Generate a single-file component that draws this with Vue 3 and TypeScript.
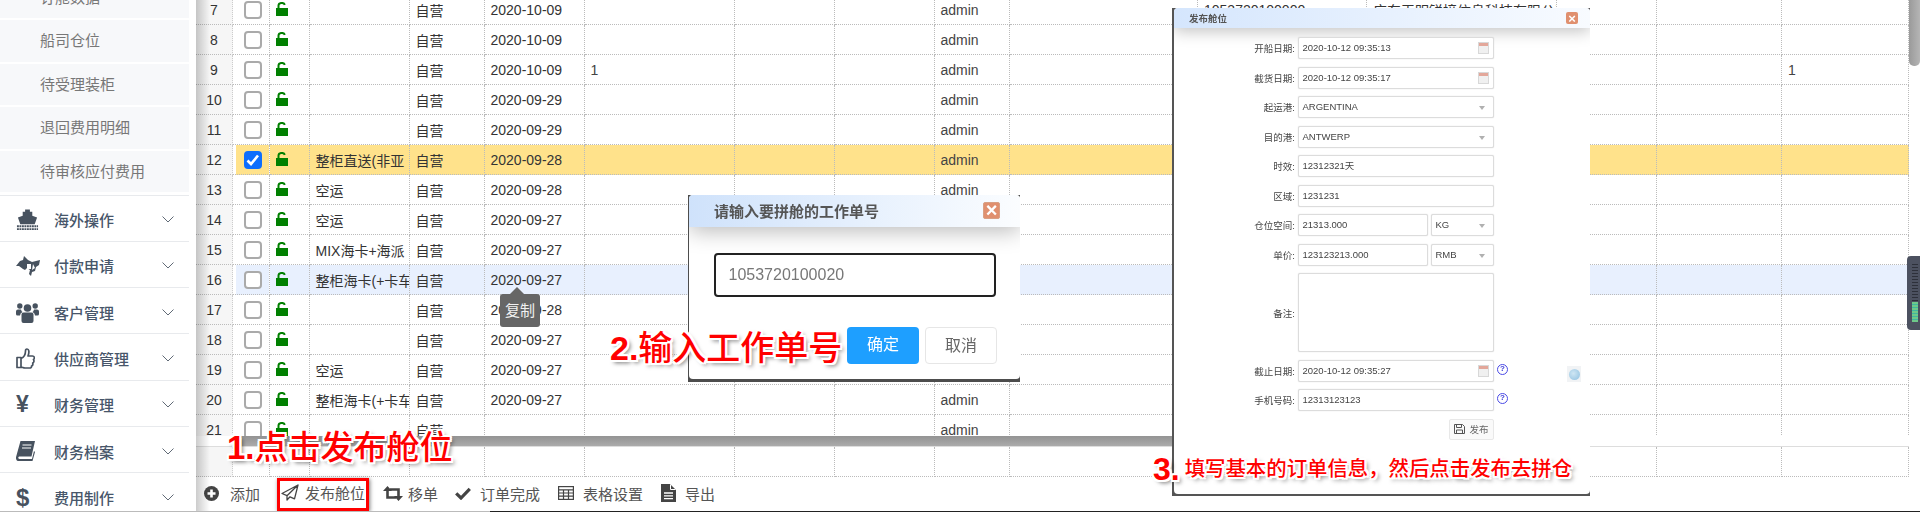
<script setup lang="ts">
const colWidths: number[] = [37, 37, 39.5, 100, 75, 100, 150, 100, 100, 75, 188.5, 169, 190, 100, 125, 127]

interface Row {
  no: number
  type?: string
  date?: string
  remark?: string
  orderNo?: string
  company?: string
  last?: string
  cls?: string
  checked?: boolean
}

const rows: Row[] = [
  { no: 7, date: '2020-10-09', orderNo: '1053720100000', company: '广东天明锐接信息科技有限公司' },
  { no: 8, date: '2020-10-09' },
  { no: 9, date: '2020-10-09', remark: '1', last: '1' },
  { no: 10, date: '2020-09-29' },
  { no: 11, date: '2020-09-29' },
  { no: 12, type: '整柜直送(非亚', date: '2020-09-28', cls: 'selected', checked: true },
  { no: 13, type: '空运', date: '2020-09-28' },
  { no: 14, type: '空运', date: '2020-09-27' },
  { no: 15, type: 'MIX海卡+海派', date: '2020-09-27' },
  { no: 16, type: '整柜海卡(+卡车)', date: '2020-09-27', cls: 'hover' },
  { no: 17, date: '2020-09-28' },
  { no: 18, date: '2020-09-27' },
  { no: 19, type: '空运', date: '2020-09-27' },
  { no: 20, type: '整柜海卡(+卡车)', date: '2020-09-27' },
  { no: 21 },
]

const subItems: string[] = ['订舱数据', '船司仓位', '待受理装柜', '退回费用明细', '待审核应付费用']
const menuItems: { key: string; label: string }[] = [
  { key: 'ship', label: '海外操作' },
  { key: 'hand', label: '付款申请' },
  { key: 'users', label: '客户管理' },
  { key: 'thumb', label: '供应商管理' },
  { key: 'yen', label: '财务管理' },
  { key: 'book', label: '财务档案' },
  { key: 'usd', label: '费用制作' },
]
</script>

<template>
  <div class="page">
    <div class="body">
      <aside class="side">
        <div class="subs">
          <div v-for="s in subItems" :key="s" class="sub">{{ s }}</div>
        </div>
        <div v-for="m in menuItems" :key="m.key" class="menu">
          <span class="micon">
            <svg v-if="m.key === 'ship'" width="23" height="22" viewBox="0 0 24 22" fill="#47525f">
              <path d="M9.500 0h5v2.500h2.500v4l5 2-2.500 7H4.500l-2.500-7 5-2v-4h2.500z" />
              <path d="M1 17.500h22M1 20.500h22" stroke="#47525f" stroke-width="2" stroke-dasharray="2 .6" fill="none" />
            </svg>
            <svg v-else-if="m.key === 'hand'" width="25" height="20" viewBox="0 0 25 20" fill="#47525f">
              <path d="M0 10 4 5l3-1 1-4 4 4 4 2 4-1 4-1-1 5-3 2-1 4-3 1-1 4-2-2 1-4-3-2-2 2-2-1-4-3H3z" />
              <path d="M11 8h4v5h-4zM17 8l2 4-3 2z" fill="#fff" />
            </svg>
            <svg v-else-if="m.key === 'users'" width="23" height="21" viewBox="0 0 23 21" fill="#47525f">
              <circle cx="11.500" cy="6" r="3.800" />
              <circle cx="3.800" cy="4" r="2.700" />
              <circle cx="19.200" cy="4" r="2.700" />
              <path d="M5.500 12.500q0-2 2-2h8q2 0 2 2V19q0 2-2 2h-8q-2 0-2-2zM0 9.500q0-2 2-2h3q.5 2 1.500 2.500Q4 11 4 13.500H1.500Q0 13.500 0 12zM23 9.500q0-2-2-2h-3q-.5 2-1.500 2.500 2.500 1 2.500 3.500h2.500q1.500 0 1.500-1.500z" />
            </svg>
            <svg v-else-if="m.key === 'thumb'" width="19" height="21" viewBox="0 0 19 21" fill="none" stroke="#47525f" stroke-width="1.700">
              <path d="M1 9.500h4v10H1zM5 10.500c2.500-1 4.500-4 4.500-7.500 0-1 .5-2 1.500-2 2 0 2.500 3 1 7h4.500c2 0 2.500 2.500 1 3.500.8 1.500.5 3-.8 3.500.4 1.500-.2 2.700-1.200 3 .2 1.500-.7 2-2 2H9c-1.500 0-2.500-.8-4-1" stroke-linejoin="round" />
            </svg>
            <span v-else-if="m.key === 'yen'" class="glyph">¥</span>
            <svg v-else-if="m.key === 'book'" width="19" height="20" viewBox="0 0 19 20" fill="#47525f">
              <path d="M4.500 0H19l-3.500 15.500H3.500c-1.500 0-1.700 2.500 0 2.500H16l2-8 1 1-2.500 9H3C.5 20-.5 18 .2 15.500z" />
              <path d="M6.500 4h9M6 7h9" stroke="#fff" stroke-width="1.200" />
            </svg>
            <span v-else class="glyph usd">$</span>
          </span>
          <span class="mlabel">{{ m.label }}</span>
          <svg class="chev" width="12" height="7" viewBox="0 0 12 7" fill="none" stroke="#606a76" stroke-width="1">
            <path d="M.5.500 6 6 11.500.500" />
          </svg>
        </div>
      </aside>

      <main class="main">
        <div class="grid-wrap">
          <table class="grid">
            <colgroup>
              <col v-for="(w, i) in colWidths" :key="i" :style="{ width: w + 'px' }" />
            </colgroup>
            <tbody>
              <tr v-for="r in rows" :key="r.no" :class="r.cls">
                <td class="idx">{{ r.no }}</td>
                <td class="cb-cell">
                  <span class="cb" :class="{ on: r.checked }">
                    <svg v-if="r.checked" width="14" height="12" viewBox="0 0 14 12" fill="none" stroke="#fff" stroke-width="2.600">
                      <path d="M1.500 6.500 5 10l7-8.500" />
                    </svg>
                  </span>
                </td>
                <td class="lock">
                  <svg width="12" height="14" viewBox="0 0 12 14">
                    <path d="M2.500 6V3.500a3.200 2.600 0 0 1 6.300-.6" fill="none" stroke="#008000" stroke-width="2" />
                    <rect y="6" width="12" height="8" fill="#008000" />
                  </svg>
                </td>
                <td>{{ r.type }}</td>
                <td>自营</td>
                <td>{{ r.date }}</td>
                <td class="soft">{{ r.remark }}</td>
                <td v-for="n in 2" :key="n"></td>
                <td class="soft">admin</td>
                <td></td>
                <td>{{ r.orderNo }}</td>
                <td>{{ r.company }}</td>
                <td></td>
                <td></td>
                <td class="soft">{{ r.last }}</td>
              </tr>
            </tbody>
          </table>
        </div>
        <div class="hscroll"><div class="hbar"></div></div>
        <table class="grid foot">
          <colgroup>
            <col v-for="(w, i) in colWidths" :key="i" :style="{ width: w + 'px' }" />
          </colgroup>
          <tbody>
            <tr>
              <td class="idx"></td>
              <td v-for="n in 15" :key="n"></td>
            </tr>
          </tbody>
        </table>
        <div class="toolbar">
          <span class="tool add">
            <svg width="15" height="15" viewBox="0 0 15 15"><circle cx="7.500" cy="7.500" r="7.500" fill="#444" /><path d="M7.500 3.500v8M3.500 7.500h8" stroke="#fff" stroke-width="2.600" /></svg>
            添加
          </span>
          <span class="tool pub">
            <svg width="18" height="17" viewBox="0 0 18 17" fill="none" stroke="#444" stroke-width="1.300" stroke-linejoin="round"><path d="M17 1 1 9.500l5 2.200zM17 1 6 11.700V16l3-3.200 4.500 2z" /></svg>
            发布舱位
          </span>
          <span class="tool move">
            <svg width="20" height="15" viewBox="0 0 20 15" fill="none" stroke="#444" stroke-width="2.600"><path d="M4.500 3v8.500H13" /><path d="M15.500 12V3.500H7" /><path d="M0 5l4.500-5L9 5zM11 10l4.500 5L20 10z" fill="#444" stroke="none" /></svg>
            移单
          </span>
          <span class="tool done">
            <svg width="16" height="13" viewBox="0 0 16 13" fill="none" stroke="#444" stroke-width="3.200"><path d="M1.200 6.300 6 11 14.800 1.800" /></svg>
            订单完成
          </span>
          <span class="tool tbl">
            <svg width="16" height="14" viewBox="0 0 16 14" fill="none" stroke="#444" stroke-width="1.200"><rect x=".6" y=".6" width="14.800" height="12.800" /><path d="M.6 3.800h14.800M.6 7h14.800M.6 10.200h14.800M5.500 3.800v9.600M10.500 3.800v9.600" /></svg>
            表格设置
          </span>
          <span class="tool exp">
            <svg width="15" height="18" viewBox="0 0 15 18"><path d="M0 0h9l6 6v12H0z" fill="#444" /><path d="M9.500.500v5h5" fill="none" stroke="#fff" stroke-width="1" /><path d="M3 9h9M3 11.800h9M3 14.600h9" stroke="#fff" stroke-width="1.300" /></svg>
            导出
          </span>
        </div>
        <div class="gutter-shadow"></div>
      </main>

      <div class="vbar"></div>
      <div class="widget"><i></i></div>

      <div class="tip">复制</div>

      <section class="dlg2">
        <div class="dlg2-inner">
          <header class="dlg2-title">
            <b>请输入要拼舱的工作单号</b>
            <span class="close big">×</span>
          </header>
          <div class="dlg2-input">1053720100020</div>
          <div class="dlg2-btns">
            <span class="btn ok">确定</span>
            <span class="btn no">取消</span>
          </div>
        </div>
      </section>

      <section class="dlg3">
        <div class="dlg3-inner">
          <header class="dlg3-title">
            <b>发布舱位</b>
            <span class="close">×</span>
          </header>
          <div class="form">
            <div class="frow"><label>开船日期:</label><div class="inp full">2020-10-12 09:35:13<span class="cal"></span></div></div>
            <div class="frow"><label>截货日期:</label><div class="inp full">2020-10-12 09:35:17<span class="cal"></span></div></div>
            <div class="frow"><label>起运港:</label><div class="inp full">ARGENTINA<span class="arr"></span></div></div>
            <div class="frow"><label>目的港:</label><div class="inp full">ANTWERP<span class="arr"></span></div></div>
            <div class="frow"><label>时效:</label><div class="inp full">12312321天</div></div>
            <div class="frow"><label>区域:</label><div class="inp full">1231231</div></div>
            <div class="frow"><label>仓位空间:</label><div class="inp num">21313.000</div><div class="inp unit">KG<span class="arr"></span></div></div>
            <div class="frow"><label>单价:</label><div class="inp num">123123213.000</div><div class="inp unit">RMB<span class="arr"></span></div></div>
            <div class="frow tall"><label>备注:</label><div class="inp full area"></div></div>
            <div class="frow"><label>截止日期:</label><div class="inp full">2020-10-12 09:35:27<span class="cal"></span></div><span class="help">?</span></div>
            <div class="frow"><label>手机号码:</label><div class="inp full">12313123123</div><span class="help">?</span></div>
            <div class="frow end"><span class="pubbtn">
              <svg width="11" height="10" viewBox="0 0 11 10" fill="none" stroke="#555" stroke-width="1"><path d="M.5.500h8l2 2v7H.5zM2.500.500v3h5v-3M2.500 9.500v-3.500h6v3.500" /></svg>
              发布
            </span></div>
          </div>
          <div class="globe"><i></i></div>
        </div>
      </section>

      <div class="note n1"><b>1.</b>点击发布舱位</div>
      <div class="note n2"><b>2.</b>输入工作单号</div>
      <div class="note n3"><b>3.</b><span>填写基本的订单信息，然后点击发布去拼仓</span></div>
    </div>
    <div class="edge"></div>
  </div>
</template>

<style>
html,
body {
  margin: 0;
  background: #fff;
}
</style>

<style scoped>
.page {
  width: 1920px;
  height: 512px;
  overflow: hidden;
  font-family: "Liberation Sans", "Noto Sans CJK SC", sans-serif;
  color: #333;
}
.body {
  position: relative;
  display: flex;
  height: 511px;
  overflow: hidden;
}
.edge {
  height: 1px;
  background: linear-gradient(to right, #bbb 490px, #222 490px);
}

/* sidebar */
.side {
  flex: 0 0 189px;
  width: 189px;
}
.subs {
  margin-top: -23.500px;
  display: flex;
  flex-direction: column;
  gap: 2px;
  padding-bottom: 2.500px;
  border-bottom: 1px solid #e8eaed;
}
.sub {
  height: 41.500px;
  line-height: 41.500px;
  padding-left: 40px;
  background: #f7f8fa;
  font-size: 15px;
  color: #777;
}
.menu {
  box-sizing: border-box;
  height: 46.330px;
  display: flex;
  align-items: center;
  padding-top: 3px;
  border-bottom: 1.500px solid #e8eaed;
  font-size: 15px;
  color: #47566a;
  font-weight: 500;
}
.micon {
  flex: 0 0 54px;
  padding-left: 16px;
  box-sizing: border-box;
  display: flex;
  align-items: center;
}
.glyph {
  font-size: 23px;
  font-weight: 700;
  line-height: 1;
  color: #47525f;
}
.usd {
  font-size: 24px;
}
.mlabel {
  flex: 1;
}
.chev {
  margin-right: 15px;
}

/* table */
.main {
  position: relative;
  margin-left: 7px;
  flex: 0 0 1713px;
  width: 1713px;
  display: flex;
  flex-direction: column;
}
.grid-wrap {
  height: 436px;
  overflow: hidden;
}
.grid {
  table-layout: fixed;
  width: 1713px;
  border-collapse: separate;
  border-spacing: 0;
  font-size: 14px;
}
.grid-wrap .grid {
  margin-top: -5px;
}
.grid td {
  box-sizing: border-box;
  height: 30px;
  padding: 0 0 0 6px;
  border-right: 1px dotted #bbb;
  border-bottom: 1px dotted #bbb;
  white-space: nowrap;
  overflow: hidden;
}
.grid td.idx {
  padding: 0;
  text-align: center;
  background: #f6f6f6;
  border-right: 1px dotted #ccc;
}
.soft {
  color: #444;
}
.cb-cell {
  padding-left: 11px !important;
}
.cb {
  box-sizing: border-box;
  display: flex;
  align-items: center;
  justify-content: center;
  width: 18px;
  height: 18px;
  margin-top: 1px;
  border: 2px solid #aaa;
  border-radius: 4px;
  background: #fff;
}
.cb.on {
  background: #0d6efd;
  border-color: #0d6efd;
}
.grid td.lock {
  vertical-align: top;
  padding-top: 7px;
}
.lock svg {
  display: block;
}
.selected td {
  background: #ffe28b;
}
.selected td.cb-cell {
  background: linear-gradient(to right, #fff 3px, #ffe28b 3px);
}
.hover td {
  background: #e8f0fe;
}
.hover td.cb-cell {
  background: linear-gradient(to right, #fff 3px, #e8f0fe 3px);
}
.hscroll {
  height: 11px;
  padding-left: 37px;
  box-sizing: border-box;
  border-bottom: 1px solid #ddd;
}
.hbar {
  width: 960px;
  height: 10px;
  background: linear-gradient(#939393, #ababab);
}
.foot td {
  height: 30px;
}
.toolbar {
  height: 34px;
  display: flex;
  align-items: center;
  font-size: 15px;
  color: #555;
}
.tool {
  display: flex;
  align-items: center;
  white-space: nowrap;
  position: relative;
  top: -1px;
}
.add {
  margin-left: 8px;
  gap: 11px;
}
.pub {
  box-sizing: border-box;
  height: 33px;
  top: 0;
  margin-left: 17px;
  padding: 0 1px 3px 1px;
  gap: 6px;
  border: 3px solid #f00;
  box-shadow: 1px 1px 4px rgba(0, 0, 0, 0.5);
}
.move {
  margin-left: 14px;
  gap: 5px;
}
.done {
  margin-left: 17px;
  gap: 9px;
}
.tbl {
  margin-left: 18px;
  gap: 9px;
}
.exp {
  margin-left: 18px;
  gap: 9px;
}
.gutter-shadow {
  position: absolute;
  left: 0;
  top: 0;
  bottom: 0;
  width: 14px;
  background: linear-gradient(to right, rgba(0, 0, 0, 0.2), rgba(0, 0, 0, 0));
  pointer-events: none;
}

/* right edge */
.vbar {
  position: absolute;
  left: 1909px;
  top: 0;
  width: 11px;
  height: 66px;
  border-radius: 0 0 5px 5px;
  background: linear-gradient(to right, #9a9a9a, #b5b5b5);
}
.widget {
  position: absolute;
  left: 1907px;
  top: 256px;
  width: 13px;
  height: 74px;
  border-radius: 4px 0 0 4px;
  background: #4c5160;
}
.widget i {
  position: absolute;
  left: 5px;
  top: 8px;
  width: 6px;
  height: 58px;
  background: repeating-linear-gradient(#2d303a 0 1px, #4c5160 1px 3px);
}
.widget i::after {
  content: "";
  position: absolute;
  left: 0;
  right: 0;
  bottom: 0;
  height: 20px;
  background: repeating-linear-gradient(#6ec98a 0 2px, #3fb7a0 2px 3px);
}

/* tooltip */
.tip {
  position: absolute;
  left: 500px;
  top: 294px;
  width: 40px;
  height: 33px;
  line-height: 33px;
  text-align: center;
  background: #666;
  color: #f0f0f0;
  border-radius: 3px;
  font-size: 15px;
}
.tip::before {
  content: "";
  position: absolute;
  left: 10px;
  top: -7px;
  border-left: 7px solid transparent;
  border-right: 7px solid transparent;
  border-bottom: 7px solid #666;
}

/* dialog 2 */
.dlg2 {
  position: absolute;
  left: 688px;
  top: 195px;
  width: 332px;
  height: 187px;
  background: #4d4d4d;
  filter: blur(0.25px);
}
.dlg2-inner {
  height: 184px;
  margin-left: 1px;
  background: #fff;
  border-radius: 4px;
  overflow: hidden;
}
.dlg2-title {
  position: relative;
  height: 32px;
  display: flex;
  align-items: center;
  justify-content: space-between;
  padding: 0 20px 2px 25px;
  box-sizing: border-box;
  background: linear-gradient(to right, #cfe2fb, #fbfdff);
  box-shadow: 0 4px 22px rgba(0, 0, 0, 0.28);
  color: #555;
  font-size: 15px;
}
.close {
  box-sizing: border-box;
  display: flex;
  align-items: center;
  justify-content: center;
  width: 12px;
  height: 12px;
  border-radius: 2px;
  background: #e0906f;
  color: #fff;
  font-size: 13px;
  font-weight: 700;
  line-height: 1;
}
.close.big {
  width: 17px;
  height: 17px;
  font-size: 20px;
  border: 1px solid #d9a084;
}
.dlg2-input {
  position: relative;
  box-sizing: border-box;
  margin: 26px 0 0 24.500px;
  width: 282px;
  height: 44px;
  line-height: 40px;
  padding-left: 13px;
  border: 2px solid #222;
  border-radius: 4px;
  background: #fff;
  color: #777;
  font-size: 16px;
}
.dlg2-btns {
  display: flex;
  justify-content: flex-end;
  gap: 6px;
  margin: 30px 23px 0 0;
}
.btn {
  box-sizing: border-box;
  width: 72px;
  height: 37px;
  line-height: 36px;
  text-align: center;
  font-size: 16px;
  border-radius: 4px;
}
.ok {
  background: #1e9fff;
  color: #fff;
}
.no {
  background: #fff;
  border: 1px solid #e6e6e6;
  color: #666;
}

/* dialog 3 */
.dlg3 {
  position: absolute;
  left: 1172px;
  top: 8px;
  width: 418px;
  height: 488px;
  background: #555;
  filter: blur(0.4px);
}
.dlg3-inner {
  position: relative;
  height: 486px;
  margin-left: 2px;
  background: #fff;
  border-radius: 4px;
  overflow: hidden;
}
.dlg3-title {
  position: relative;
  height: 20px;
  display: flex;
  align-items: center;
  justify-content: space-between;
  padding: 0 12px 0 15px;
  background: linear-gradient(to right, #d5e6fd, #f8fbff);
  box-shadow: 0 3px 16px rgba(0, 0, 0, 0.25);
  color: #555;
  font-size: 9.500px;
}
.form {
  padding-top: 9px;
  display: flex;
  flex-direction: column;
  gap: 7.500px;
  font-size: 9.500px;
  color: #444;
}
.frow {
  display: flex;
  align-items: center;
  height: 22px;
}
.frow.tall {
  height: 79px;
}
.frow.end {
  justify-content: flex-start;
  padding-left: 275px;
  height: 21px;
}
.frow label {
  flex: 0 0 121px;
  text-align: right;
  margin-right: 3px;
}
.inp {
  position: relative;
  box-sizing: border-box;
  height: 22px;
  line-height: 20px;
  padding-left: 3.500px;
  border: 1px solid #dcdcdc;
  box-shadow: 0 0 1px #ccc;
  border-radius: 2px;
  background: #fff;
}
.full {
  width: 196px;
}
.num {
  width: 130px;
  margin-right: 3px;
}
.unit {
  width: 63px;
}
.area {
  height: 79px;
}
.cal {
  position: absolute;
  right: 4px;
  top: 4px;
  width: 11px;
  height: 12px;
  box-sizing: border-box;
  background: linear-gradient(#e3a79a 0 3px, #f0f0f0 3px);
  border: 1px solid #d8d8d8;
}
.arr {
  position: absolute;
  right: 8px;
  top: 9px;
  border-left: 3.500px solid transparent;
  border-right: 3.500px solid transparent;
  border-top: 4px solid #b0b0b0;
}
.help {
  box-sizing: border-box;
  width: 11px;
  height: 11px;
  margin: -3px 0 0 3px;
  border: 1.500px solid #4a4ae6;
  border-radius: 50%;
  color: #3b3bd8;
  font-size: 8px;
  font-weight: 700;
  line-height: 8px;
  text-align: center;
}
.pubbtn {
  box-sizing: border-box;
  width: 45px;
  height: 21px;
  display: flex;
  align-items: center;
  justify-content: center;
  gap: 4px;
  border: 1px solid #e8e8e8;
  border-radius: 2px;
  background: #fafafa;
  color: #666;
}
.globe {
  position: absolute;
  left: 393px;
  top: 358px;
  width: 14px;
  height: 16px;
  background: #f1f3f5;
  display: flex;
  align-items: center;
  justify-content: center;
}
.globe i {
  width: 11px;
  height: 11px;
  border-radius: 50%;
  background: radial-gradient(circle at 40% 40%, #cfe6f3, #8fc0e0);
}

/* annotations */
.note {
  position: absolute;
  color: #f00;
  white-space: nowrap;
  line-height: 1;
  font-weight: 500;
  text-shadow:
    1px 0 0 #fff, -1px 0 0 #fff, 0 1px 0 #fff, 0 -1px 0 #fff,
    2px 0 0 #fff, -2px 0 0 #fff, 0 2px 0 #fff, 0 -2px 0 #fff,
    2px 2px 0 #fff, -2px -2px 0 #fff, 2px -2px 0 #fff, -2px 2px 0 #fff,
    3px 3px 4px rgba(0, 0, 0, 0.55);
}
.note b {
  font-family: "Liberation Sans", sans-serif;
  font-weight: 700;
}
.n1 {
  left: 227px;
  top: 431px;
  font-size: 33px;
}
.n2 {
  left: 610px;
  top: 331px;
  font-size: 34px;
}
.n3 {
  left: 1153px;
  top: 453px;
  font-size: 32px;
  display: flex;
  align-items: center;
}
.n3 span {
  font-size: 20.400px;
  margin-left: 5px;
}
</style>
